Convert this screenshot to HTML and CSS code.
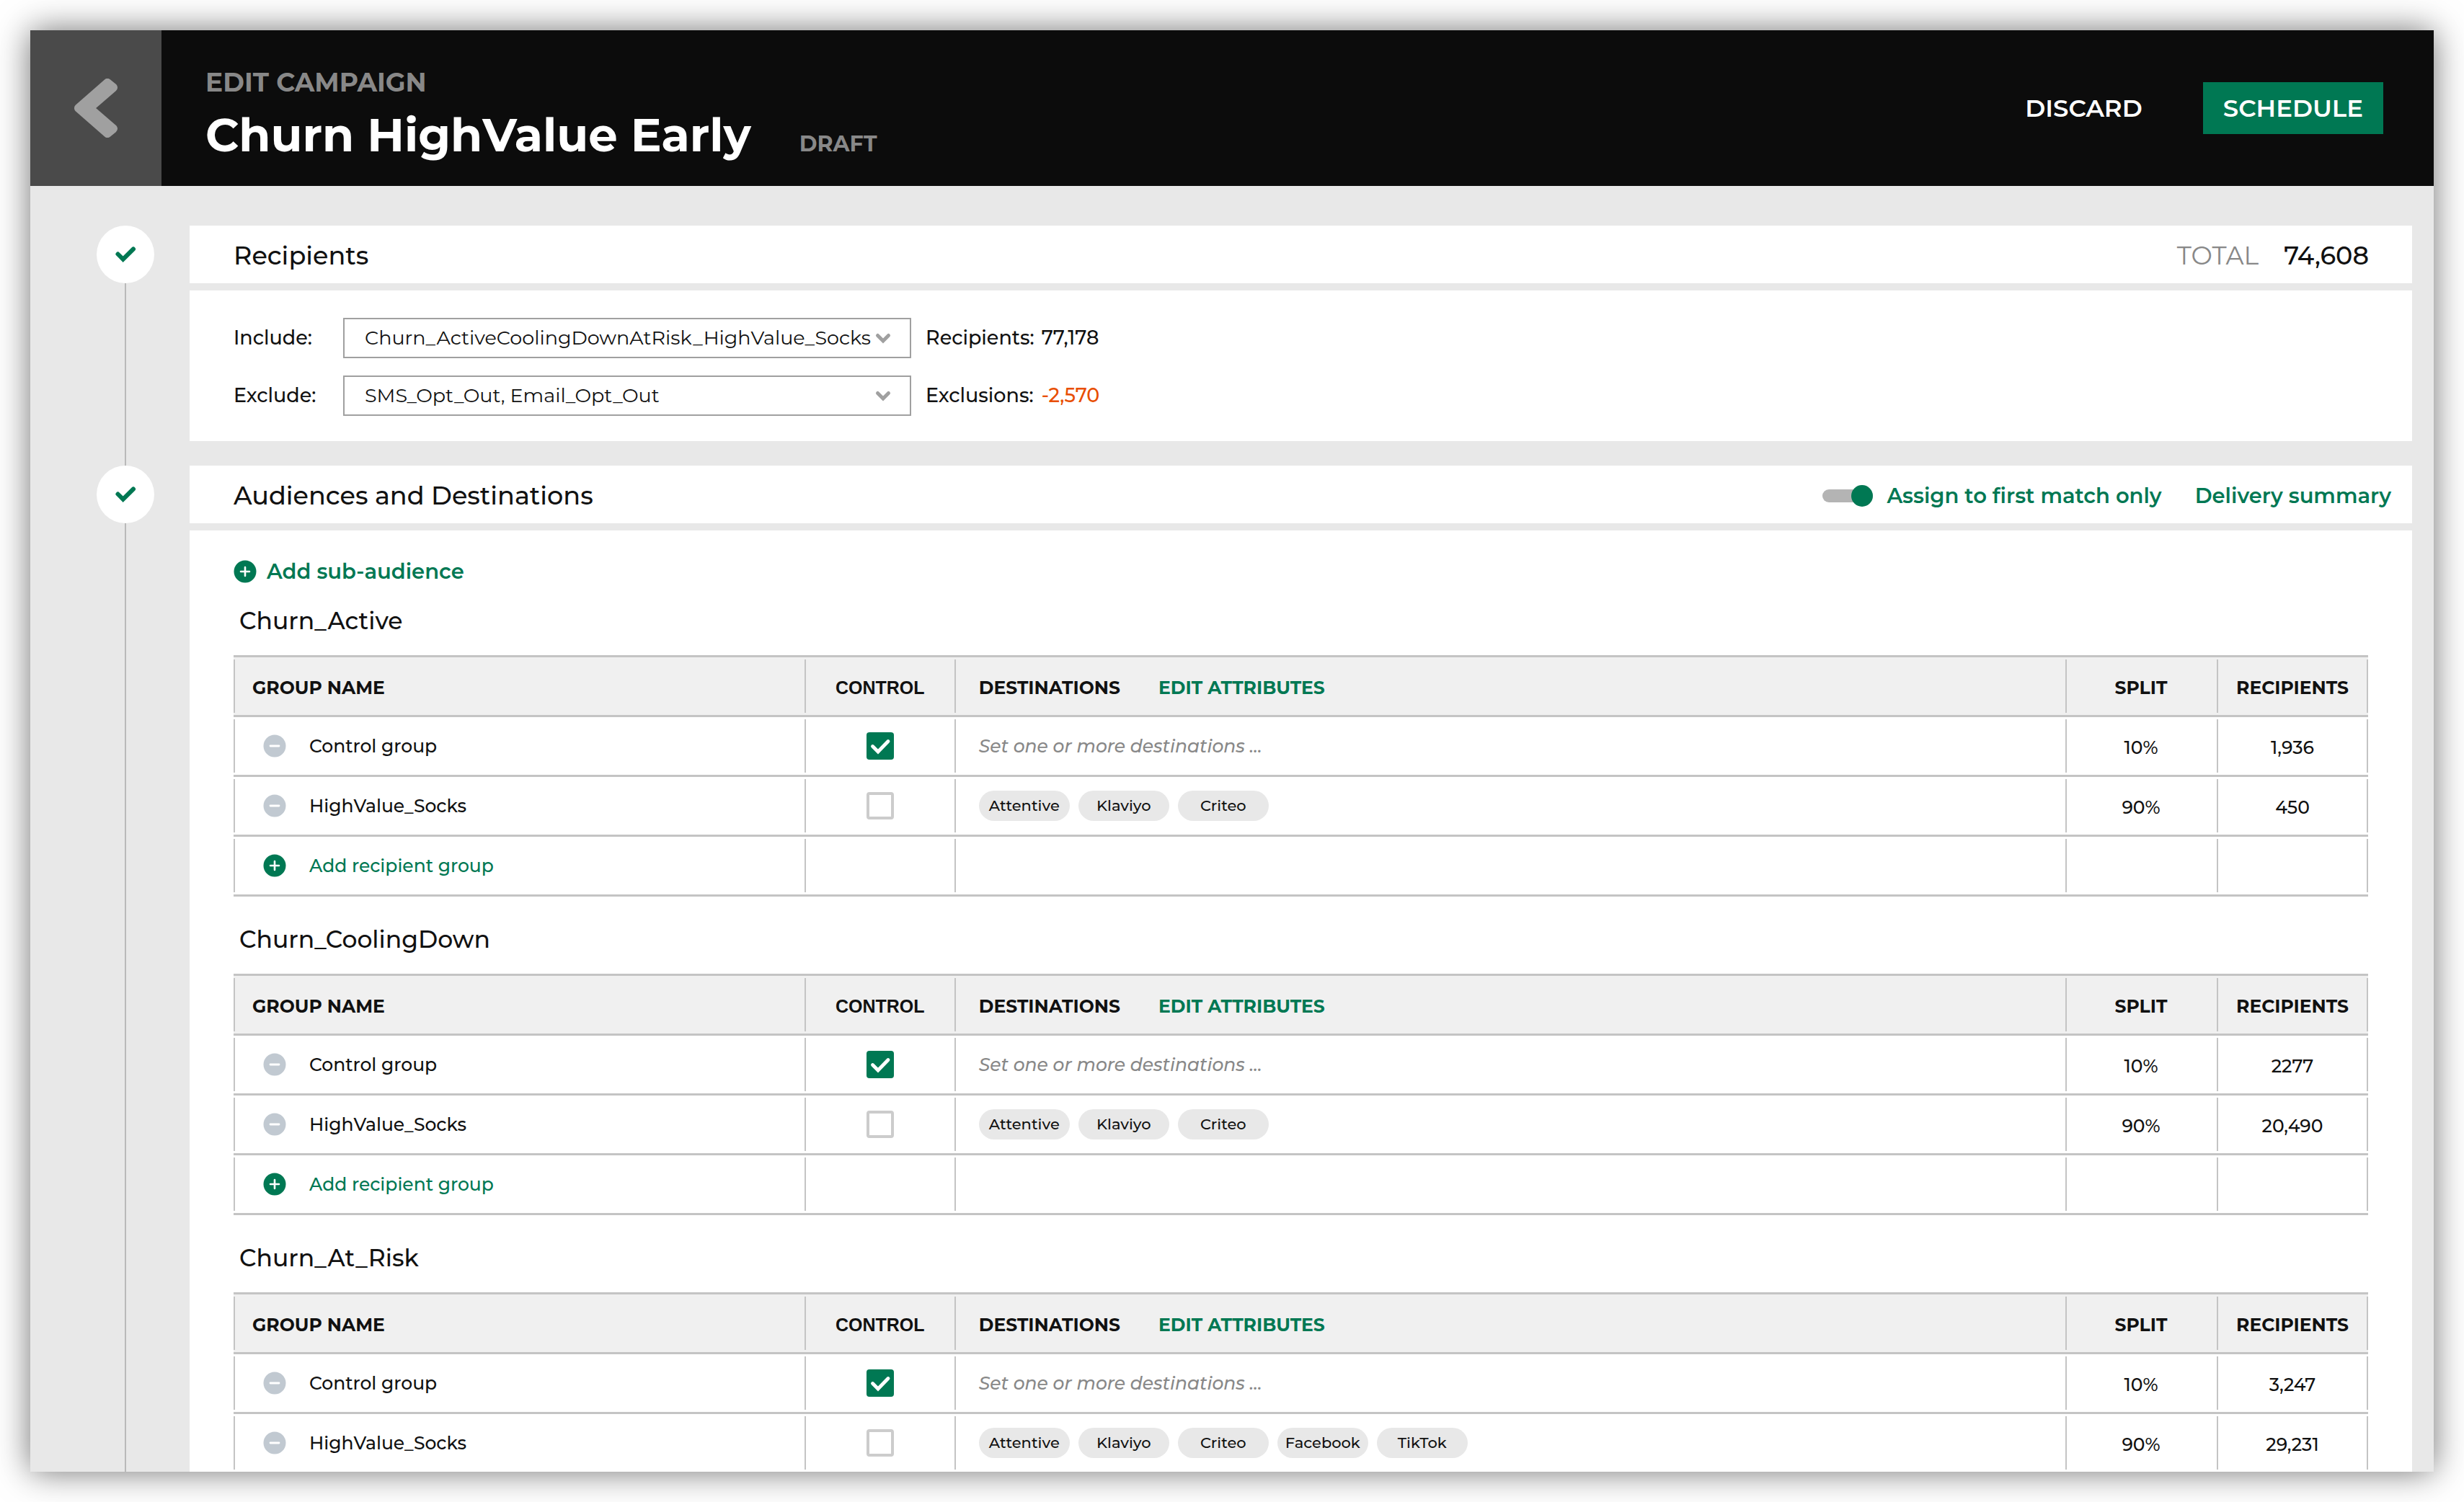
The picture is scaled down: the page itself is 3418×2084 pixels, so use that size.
FILE: index.html
```html
<!DOCTYPE html>
<html lang="en">
<head>
<meta charset="utf-8">
<title>Edit campaign: Churn HighValue Early</title>
<link rel="stylesheet" href="styles.css">
</head>
<body>
<svg class="sprite" aria-hidden="true">
  <symbol id="plus" viewBox="0 0 32 32"><circle cx="16" cy="16" r="15.5" fill="#007853"/><path d="M16 10v12M10 16h12" stroke="#fff" stroke-width="2.6" stroke-linecap="round"/></symbol>
  <symbol id="minus" viewBox="0 0 32 32"><circle cx="16" cy="16" r="15.5" fill="#c1c9d1"/><path d="M10 16h12" stroke="#fff" stroke-width="2.8" stroke-linecap="round"/></symbol>
  <symbol id="chevron" viewBox="0 0 24 16"><path d="M4.500 4.500L12 12l7.500-7.500" fill="none" stroke="#a0a0a0" stroke-width="5" stroke-linecap="round"/></symbol>
  <symbol id="done" viewBox="0 0 80 80"><path d="M29.500 39.500l7.200 7.200L51 32.500" fill="none" stroke="#007853" stroke-width="6" stroke-linecap="round"/></symbol>
</svg>
<div class="window">
  <header class="topbar">
    <button class="back" type="button" aria-label="Back"><svg viewBox="0 0 60 82"><path d="M46 6L6 41l40 35 8-6.500L21 41l33-28.500z" fill="#a0a0a0" stroke="#a0a0a0" stroke-width="12" stroke-linejoin="round"/></svg></button>
    <div class="heading">
      <p class="eyebrow">EDIT CAMPAIGN</p>
      <div class="title-line"><h1>Churn HighValue Early</h1><span class="status">DRAFT</span></div>
    </div>
    <div class="actions">
      <button class="discard" type="button">DISCARD</button>
      <button class="schedule" type="button">SCHEDULE</button>
    </div>
  </header>
  <main>
    <section class="step">
      <div class="rail"><svg class="marker"><use href="#done"/></svg></div>
      <div class="cards">
        <div class="card-head">
          <h2>Recipients</h2>
          <p class="total"><span>TOTAL</span><strong>74,608</strong></p>
        </div>
        <form class="card-body filters">
          <label for="include">Include:</label>
          <div class="picker"><select id="include"><option>Churn_ActiveCoolingDownAtRisk_HighValue_Socks</option></select><svg><use href="#chevron"/></svg></div>
          <span>Recipients:</span><span>77,178</span>
          <label for="exclude">Exclude:</label>
          <div class="picker"><select id="exclude"><option>SMS_Opt_Out, Email_Opt_Out</option></select><svg><use href="#chevron"/></svg></div>
          <span>Exclusions:</span><span class="negative">-2,570</span>
        </form>
      </div>
    </section>
    <section class="step">
      <div class="rail"><svg class="marker"><use href="#done"/></svg></div>
      <div class="cards">
        <div class="card-head with-links">
          <h2>Audiences and Destinations</h2>
          <div class="links">
            <label class="toggle"><input type="checkbox" checked>Assign to first match only</label>
            <a href="#summary">Delivery summary</a>
          </div>
        </div>
        <div class="card-body audiences">
          <button class="add-sub" type="button"><svg><use href="#plus"/></svg>Add sub-audience</button>

          <article class="audience">
            <h3>Churn_Active</h3>
            <table>
              <thead><tr><th class="c-name">GROUP NAME</th><th class="c-control">CONTROL</th><th class="c-dest">DESTINATIONS <a href="#attributes">EDIT ATTRIBUTES</a></th><th class="c-num">SPLIT</th><th class="c-num">RECIPIENTS</th></tr></thead>
              <tbody>
                <tr><td><div class="group"><button type="button" aria-label="Remove Control group"><svg><use href="#minus"/></svg></button>Control group</div></td><td class="c-control"><input type="checkbox" aria-label="Control" checked></td><td class="c-dest empty">Set one or more destinations ...</td><td class="c-num">10%</td><td class="c-num">1,936</td></tr>
                <tr><td><div class="group"><button type="button" aria-label="Remove HighValue_Socks"><svg><use href="#minus"/></svg></button>HighValue_Socks</div></td><td class="c-control"><input type="checkbox" aria-label="Control"></td><td class="c-dest"><div class="chips"><span>Attentive</span><span>Klaviyo</span><span>Criteo</span></div></td><td class="c-num">90%</td><td class="c-num">450</td></tr>
                <tr><td><button class="group add" type="button"><svg><use href="#plus"/></svg>Add recipient group</button></td><td></td><td></td><td></td><td></td></tr>
              </tbody>
            </table>
          </article>

          <article class="audience">
            <h3>Churn_CoolingDown</h3>
            <table>
              <thead><tr><th class="c-name">GROUP NAME</th><th class="c-control">CONTROL</th><th class="c-dest">DESTINATIONS <a href="#attributes">EDIT ATTRIBUTES</a></th><th class="c-num">SPLIT</th><th class="c-num">RECIPIENTS</th></tr></thead>
              <tbody>
                <tr><td><div class="group"><button type="button" aria-label="Remove Control group"><svg><use href="#minus"/></svg></button>Control group</div></td><td class="c-control"><input type="checkbox" aria-label="Control" checked></td><td class="c-dest empty">Set one or more destinations ...</td><td class="c-num">10%</td><td class="c-num">2277</td></tr>
                <tr><td><div class="group"><button type="button" aria-label="Remove HighValue_Socks"><svg><use href="#minus"/></svg></button>HighValue_Socks</div></td><td class="c-control"><input type="checkbox" aria-label="Control"></td><td class="c-dest"><div class="chips"><span>Attentive</span><span>Klaviyo</span><span>Criteo</span></div></td><td class="c-num">90%</td><td class="c-num">20,490</td></tr>
                <tr><td><button class="group add" type="button"><svg><use href="#plus"/></svg>Add recipient group</button></td><td></td><td></td><td></td><td></td></tr>
              </tbody>
            </table>
          </article>

          <article class="audience">
            <h3>Churn_At_Risk</h3>
            <table>
              <thead><tr><th class="c-name">GROUP NAME</th><th class="c-control">CONTROL</th><th class="c-dest">DESTINATIONS <a href="#attributes">EDIT ATTRIBUTES</a></th><th class="c-num">SPLIT</th><th class="c-num">RECIPIENTS</th></tr></thead>
              <tbody>
                <tr><td><div class="group"><button type="button" aria-label="Remove Control group"><svg><use href="#minus"/></svg></button>Control group</div></td><td class="c-control"><input type="checkbox" aria-label="Control" checked></td><td class="c-dest empty">Set one or more destinations ...</td><td class="c-num">10%</td><td class="c-num">3,247</td></tr>
                <tr><td><div class="group"><button type="button" aria-label="Remove HighValue_Socks"><svg><use href="#minus"/></svg></button>HighValue_Socks</div></td><td class="c-control"><input type="checkbox" aria-label="Control"></td><td class="c-dest"><div class="chips"><span>Attentive</span><span>Klaviyo</span><span>Criteo</span><span>Facebook</span><span>TikTok</span></div></td><td class="c-num">90%</td><td class="c-num">29,231</td></tr>
              </tbody>
            </table>
          </article>
        </div>
      </div>
    </section>
  </main>
</div>
</body>
</html>
```
FILE: styles.css
```css
:root {
  --green: #007853;
  --ink: #111;
  --muted: #888;
  --line: #c4c4c4;
  --page: #e8e8e8;
}

* { box-sizing: border-box; }

body {
  margin: 0;
  height: 100vh;
  padding: 42px;
  background: #fff;
  color: var(--ink);
  font: 500 25px/32px Montserrat, Inter, sans-serif;
}

h1, h2, h3, p { margin: 0; }

button {
  padding: 0;
  border: 0;
  background: none;
  color: inherit;
  font: inherit;
  cursor: pointer;
}

a { color: var(--green); text-decoration: none; }

.sprite { display: none; }

.window {
  display: flex;
  flex-direction: column;
  height: 100%;
  overflow: hidden;
  background: var(--page);
  box-shadow: 0 0 44px rgba(0, 0, 0, .56);
}

/* Top bar */
.topbar {
  flex: none;
  display: flex;
  height: 216px;
  padding-right: 70px;
  background: #0c0c0c;
  color: #fff;
}

.back {
  display: flex;
  align-items: center;
  justify-content: center;
  width: 182px;
  background: #4a4a4a;
}

.back svg { width: 60px; height: 82px; }

.heading { padding: 52px 0 0 61px; }

.eyebrow {
  color: var(--muted);
  font-size: 36px;
  font-weight: 700;
  line-height: 40px;
}

.title-line {
  display: flex;
  align-items: baseline;
  gap: 67px;
  margin-top: 17px;
}

h1 { font-size: 64px; font-weight: 700; line-height: 72px; }

.status { color: var(--muted); font-size: 30px; font-weight: 700; }

.actions {
  display: flex;
  align-items: center;
  gap: 84px;
  margin-left: auto;
}

.discard, .schedule { font-size: 34px; font-weight: 600; line-height: 72px; }
.schedule { padding: 0 28px; background: var(--green); }

/* Steps */
main {
  flex: 1;
  min-height: 0;
  overflow: hidden;
  padding: 55px 30px 0 92px;
}

.step { display: flex; gap: 49px; }

.rail {
  flex: none;
  width: 80px;
  background: linear-gradient(#b9b9b9, #b9b9b9) center / 2px 100% no-repeat;
}

.marker {
  display: block;
  width: 80px;
  height: 80px;
  border-radius: 50%;
  background: #fff;
}

.cards {
  flex: 1;
  min-width: 0;
  display: flex;
  flex-direction: column;
  gap: 10px;
  padding-bottom: 34px;
}

.card-head {
  display: flex;
  align-items: center;
  justify-content: space-between;
  height: 80px;
  padding: 4px 60px 0 61px;
  background: #fff;
  font-size: 35px;
}

.card-head.with-links { padding-right: 29px; }

h2 { font-size: 35px; font-weight: 500; line-height: 40px; }

.total { display: flex; gap: 35px; line-height: 40px; }
.total span { color: var(--muted); font-weight: 400; }
.total strong { font-weight: 500; }

.card-body { background: #fff; padding: 37px 61px; }

/* Recipient filters */
.filters {
  display: grid;
  grid-template-columns: 152px 788px auto auto;
  justify-content: start;
  align-items: center;
  row-gap: 24px;
  padding-top: 38px;
  padding-bottom: 35px;
  font-size: 27px;
}

.picker { display: grid; align-items: center; justify-items: end; }
.picker > * { grid-area: 1 / 1; }

.picker svg {
  width: 24px;
  height: 16px;
  margin-right: 27px;
  pointer-events: none;
}

.picker select {
  appearance: none;
  width: 100%;
  height: 56px;
  padding: 0 28px;
  border: 2px solid #a0a0a0;
  border-radius: 0;
  background: #fff;
  color: var(--ink);
  font: 400 27px/40px Montserrat, Inter, sans-serif;
}

.filters span { padding-left: 20px; }
.filters span + span { padding-left: 10px; }
.filters .negative { color: #e84e00; }

/* Audience header links */
.links {
  display: flex;
  align-items: center;
  gap: 46px;
  color: var(--green);
  font-size: 29px;
  font-weight: 600;
  line-height: 40px;
}

.toggle { display: flex; align-items: center; gap: 20px; }

.toggle input {
  appearance: none;
  display: grid;
  align-items: center;
  width: 70px;
  height: 30px;
  margin: 0;
}

.toggle input::before, .toggle input::after { content: ""; grid-area: 1 / 1; }
.toggle input::before { height: 18px; border-radius: 9px; background: #b4b4b4; }

.toggle input::after {
  justify-self: end;
  width: 30px;
  height: 30px;
  border-radius: 50%;
  background: var(--green);
}

/* Sub-audiences */
.add-sub {
  display: flex;
  align-items: center;
  gap: 14px;
  color: var(--green);
  font-size: 29px;
  font-weight: 600;
  line-height: 40px;
}

.add-sub svg, .group svg { display: block; width: 32px; height: 32px; }

.audience { padding-top: 28px; }
.audience + .audience { padding-top: 39px; }

h3 {
  margin-bottom: 28px;
  padding-left: 8px;
  font-size: 33px;
  font-weight: 500;
  line-height: 40px;
}

table {
  width: 100%;
  table-layout: fixed;
  border-spacing: 0;
}

th, td {
  height: 83px;
  padding: 0;
  border-bottom: 3px solid var(--line);
  background: linear-gradient(var(--line), var(--line)) left center / 2px calc(100% - 6px) no-repeat;
}

th:last-child, td:last-child {
  background:
    linear-gradient(var(--line), var(--line)) left center / 2px calc(100% - 6px) no-repeat,
    linear-gradient(var(--line), var(--line)) right center / 2px calc(100% - 6px) no-repeat;
}

th {
  height: 86px;
  padding-top: 4px;
  border-top: 3px solid var(--line);
  font-weight: 700;
  text-align: left;
}

thead tr { background: #f0f0f0; }

.c-name { width: 26.74%; padding-left: 26px; }
.c-control { width: 208px; padding-left: 2px; text-align: center; }
th.c-control { font-family: "Liberation Sans", Arial, sans-serif; }
.c-dest { padding-left: 34px; }
.c-dest a { margin-left: 46px; }
.c-num { width: 210px; padding-top: 4px; text-align: center; }

.group {
  display: flex;
  align-items: center;
  gap: 32px;
  padding-left: 41px;
}

.add { color: var(--green); }

.empty { color: var(--muted); font-style: italic; }

td input {
  appearance: none;
  display: block;
  width: 38px;
  height: 38px;
  margin: 0 auto;
  border: 4px solid #ccc;
  border-radius: 4px;
}

td input:checked {
  border: 0;
  background: var(--green) url("data:image/svg+xml,%3Csvg xmlns='http://www.w3.org/2000/svg' viewBox='0 0 38 38'%3E%3Cpath d='M8.500 19.500L16 27l14-14.500' fill='none' stroke='%23fff' stroke-width='4.800' stroke-linecap='round'/%3E%3C/svg%3E") center / 38px 38px no-repeat;
}

.chips { display: flex; gap: 12px; }

.chips span {
  min-width: 126px;
  border-radius: 21px;
  background: #e8e8e8;
  font-size: 21px;
  line-height: 42px;
  text-align: center;
}
```
